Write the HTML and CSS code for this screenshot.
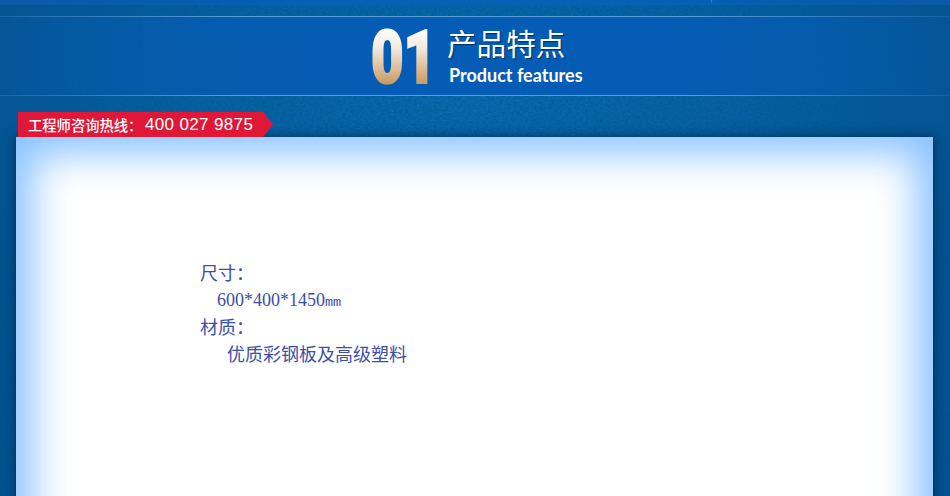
FILE: index.html
```html
<!DOCTYPE html>
<html lang="zh-CN">
<head>
<meta charset="utf-8">
<title>产品特点</title>
<link rel="stylesheet" href="styles.css">
</head>
<body>
<svg class="noise" aria-hidden="true" width="950" height="496">
  <filter id="grain"><feTurbulence type="fractalNoise" baseFrequency="0.35 0.5" numOctaves="3" seed="4"/><feColorMatrix values="0 0 0 0 0  0 0 0 0 0.1  0 0 0 0 0.25  0.9 0.9 0 0 -0.6"/></filter>
  <rect width="950" height="496" filter="url(#grain)"/>
</svg>
<div class="page">
  <div class="topbar"></div>
  <header class="band">
    <svg class="num" width="92" height="78" viewBox="0 0 92 78">
      <defs>
        <linearGradient id="gold" gradientUnits="userSpaceOnUse" x1="0" y1="-53" x2="0" y2="0">
          <stop offset="0" stop-color="#ffffff"/>
          <stop offset=".35" stop-color="#f4e9dc"/>
          <stop offset="1" stop-color="#cb9e66"/>
        </linearGradient>
      </defs>
      <text class="num-text" transform="translate(1 65.5) scale(.76 1)" fill="url(#gold)" stroke="url(#gold)" stroke-width="2.2">01</text>
    </svg>
    <div class="titles">
      <h1 class="zh">产品特点</h1>
      <p class="en">Product features</p>
    </div>
  </header>
  <div class="tag"><span class="tag-label">工程师咨询热线：</span><span class="tag-phone">400 027 9875</span></div>
  <main class="card">
    <div class="spec">
      <p>尺寸：</p>
      <p class="size">600*400*1450<span class="mm">mm</span></p>
      <p>材质：</p>
      <p class="material">优质彩钢板及高级塑料</p>
    </div>
  </main>
</div>
</body>
</html>
```

FILE: styles.css
```css
html, body { margin: 0; padding: 0; height: 100%; overflow: hidden; }
body {
  position: relative;
  background:
    radial-gradient(ellipse 560px 300px at 470px 90px, #0a6cb4 0%, #0761a8 45%, rgba(4,80,145,0) 100%),
    #054f92;
}
.noise { position: absolute; left: 0; top: 0; }
.page { position: relative; }
.topbar {
  height: 5px;
  background:
    linear-gradient(#3f88cc, #1a6cbc) 711px 0 / 1px 3px no-repeat,
    linear-gradient(90deg, #0b5aa6, #0560b6 30%, #0560b6 75%, #0a5aa6);
}
.band {
  position: relative;
  margin-top: 11px;
  height: 78px;
  border-top: 1px solid;
  border-bottom: 1px solid;
  border-image: linear-gradient(90deg, rgba(90,160,215,.25), rgba(125,185,230,.7) 25%, rgba(125,185,230,.7) 72%, rgba(90,160,215,.2)) 1;
  background: linear-gradient(90deg, rgba(5,85,160,.3) 0%, #055cae 22%, #045cb4 40%, #045cb4 70%, #055cae 82%, rgba(5,85,160,.3) 100%);
  display: flex;
  padding-left: 370px;
}
.num { flex: none; margin: 0 -14px 0 0; width: 92px; height: 78px; overflow: visible; }
.num-text { font: 900 74px Roboto, "Liberation Sans", sans-serif; }
.titles { display: flex; flex-direction: column; }
.zh {
  margin: 7px 0 0 -1px;
  font: 400 29.6px/38px "Noto Sans CJK SC", sans-serif;
  color: #fff;
  text-shadow: 1px 1px 1px #012f60;
}
.en {
  margin: 1px 0 0 1px;
  font: 700 18px/24px Lato, sans-serif;
  color: #fff;
}
.tag {
  margin: 16px 0 0 18px;
  width: 245px;
  height: 25px;
  padding-left: 10px;
  background: #e01838;
  clip-path: polygon(0 0, 245px 0, 255px 50%, 245px 100%, 0 100%);
  color: #fff;
  display: flex;
  align-items: center;
}
.tag-label { flex: none; width: 117px; font: 500 14.3px/25px "Noto Sans CJK SC", sans-serif; white-space: nowrap; }
.tag-phone { flex: none; font: 400 17px/25px "Liberation Sans", sans-serif; letter-spacing: .35px; white-space: nowrap; }
.card {
  margin: 0 17px 0 16px;
  height: 500px;
  padding: 122px 0 0 184px;
  box-sizing: border-box;
  background: #fff;
  box-shadow: inset 0 0 40px 16px #88c2ff, 0 0 10px 1px rgba(0,20,50,.55);
}
.spec p {
  margin: 0;
  height: 27px;
  font: 400 18px/27px "Noto Sans CJK SC", serif;
  color: #3b4fa8;
  white-space: nowrap;
}
.spec .size { padding-left: 17px; font: 400 18px/29px "Liberation Serif", serif; }
.mm { font: 400 13.5px "Liberation Mono", monospace; }
.spec .material { padding-left: 27px; }
```
